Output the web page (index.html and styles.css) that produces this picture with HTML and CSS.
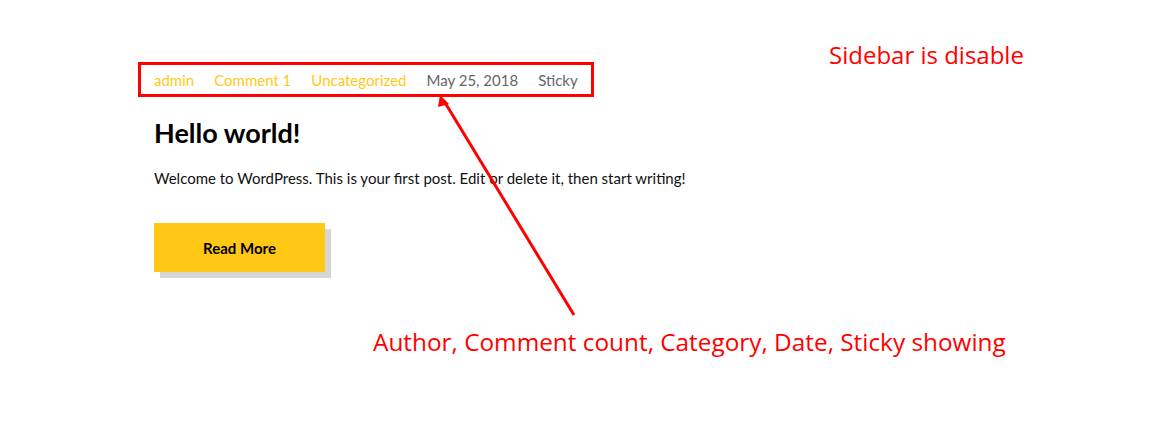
FILE: index.html
```html
<!DOCTYPE html>
<html>
<head>
<meta charset="utf-8">
<link rel="stylesheet" href="styles.css">
</head>
<body>
<div class="page">
  <article class="post">
    <div class="meta">
      <a class="meta-link">admin</a>
      <a class="meta-link">Comment 1</a>
      <a class="meta-link">Uncategorized</a>
      <span class="meta-text">May 25, 2018</span>
      <span class="meta-text">Sticky</span>
    </div>
    <h2 class="title">Hello world!</h2>
    <p class="excerpt">Welcome to WordPress. This is your first post. Edit or delete it, then start writing!</p>
    <a class="btn">Read More</a>
  </article>
  <div class="note note-sidebar">Sidebar is disable</div>
  <div class="note note-meta">Author, Comment count, Category, Date, Sticky showing</div>
  <svg class="arrow" width="1163" height="438" viewBox="0 0 1163 438">
    <line x1="574" y1="315" x2="444" y2="101" stroke="#ff0000" stroke-width="3"/>
    <polygon points="440,95 449,104 438,107" fill="#ff0000"/>
  </svg>
</div>
</body>
</html>
```
FILE: styles.css
```css
html, body {
  margin: 0;
  padding: 0;
  background: #fff;
}
.page {
  position: relative;
  width: 1163px;
  height: 438px;
  overflow: hidden;
  font-family: "Lato", "DejaVu Sans", sans-serif;
}
.post {
  padding: 62px 0 0 138px;
  display: flex;
  flex-direction: column;
  align-items: flex-start;
}
.meta {
  display: flex;
  gap: 20px;
  border: 3px solid #ff0000;
  padding: 0 13px 0 13px;
  height: 29px;
  align-items: center;
  font-size: 15px;
}
.meta-link { color: #ffc915; }
.meta-text { color: #666; }
.title {
  margin: 20px 0 0 16px;
  font-size: 27px;
  font-weight: 700;
  color: #000;
  line-height: 32px;
}
.excerpt {
  margin: 19px 0 0 16px;
  font-size: 15px;
  color: #111;
  line-height: 20px;
}
.btn {
  margin: 35px 0 0 16px;
  width: 171px;
  height: 49px;
  background: #ffc815;
  box-shadow: 6px 6px 0 #d6d6d6;
  display: flex;
  align-items: center;
  justify-content: center;
  font-size: 15px;
  font-weight: 700;
  color: #000;
}
.note {
  position: absolute;
  color: #ff0000;
  font-family: "Open Sans", "Noto Sans", sans-serif;
  font-size: 24px;
  white-space: nowrap;
}
.note-sidebar {
  left: 829px;
  top: 38px;
}
.note-meta {
  left: 373px;
  top: 325px;
  font-size: 24.35px;
}
.arrow {
  position: absolute;
  left: 0;
  top: 0;
}
```
